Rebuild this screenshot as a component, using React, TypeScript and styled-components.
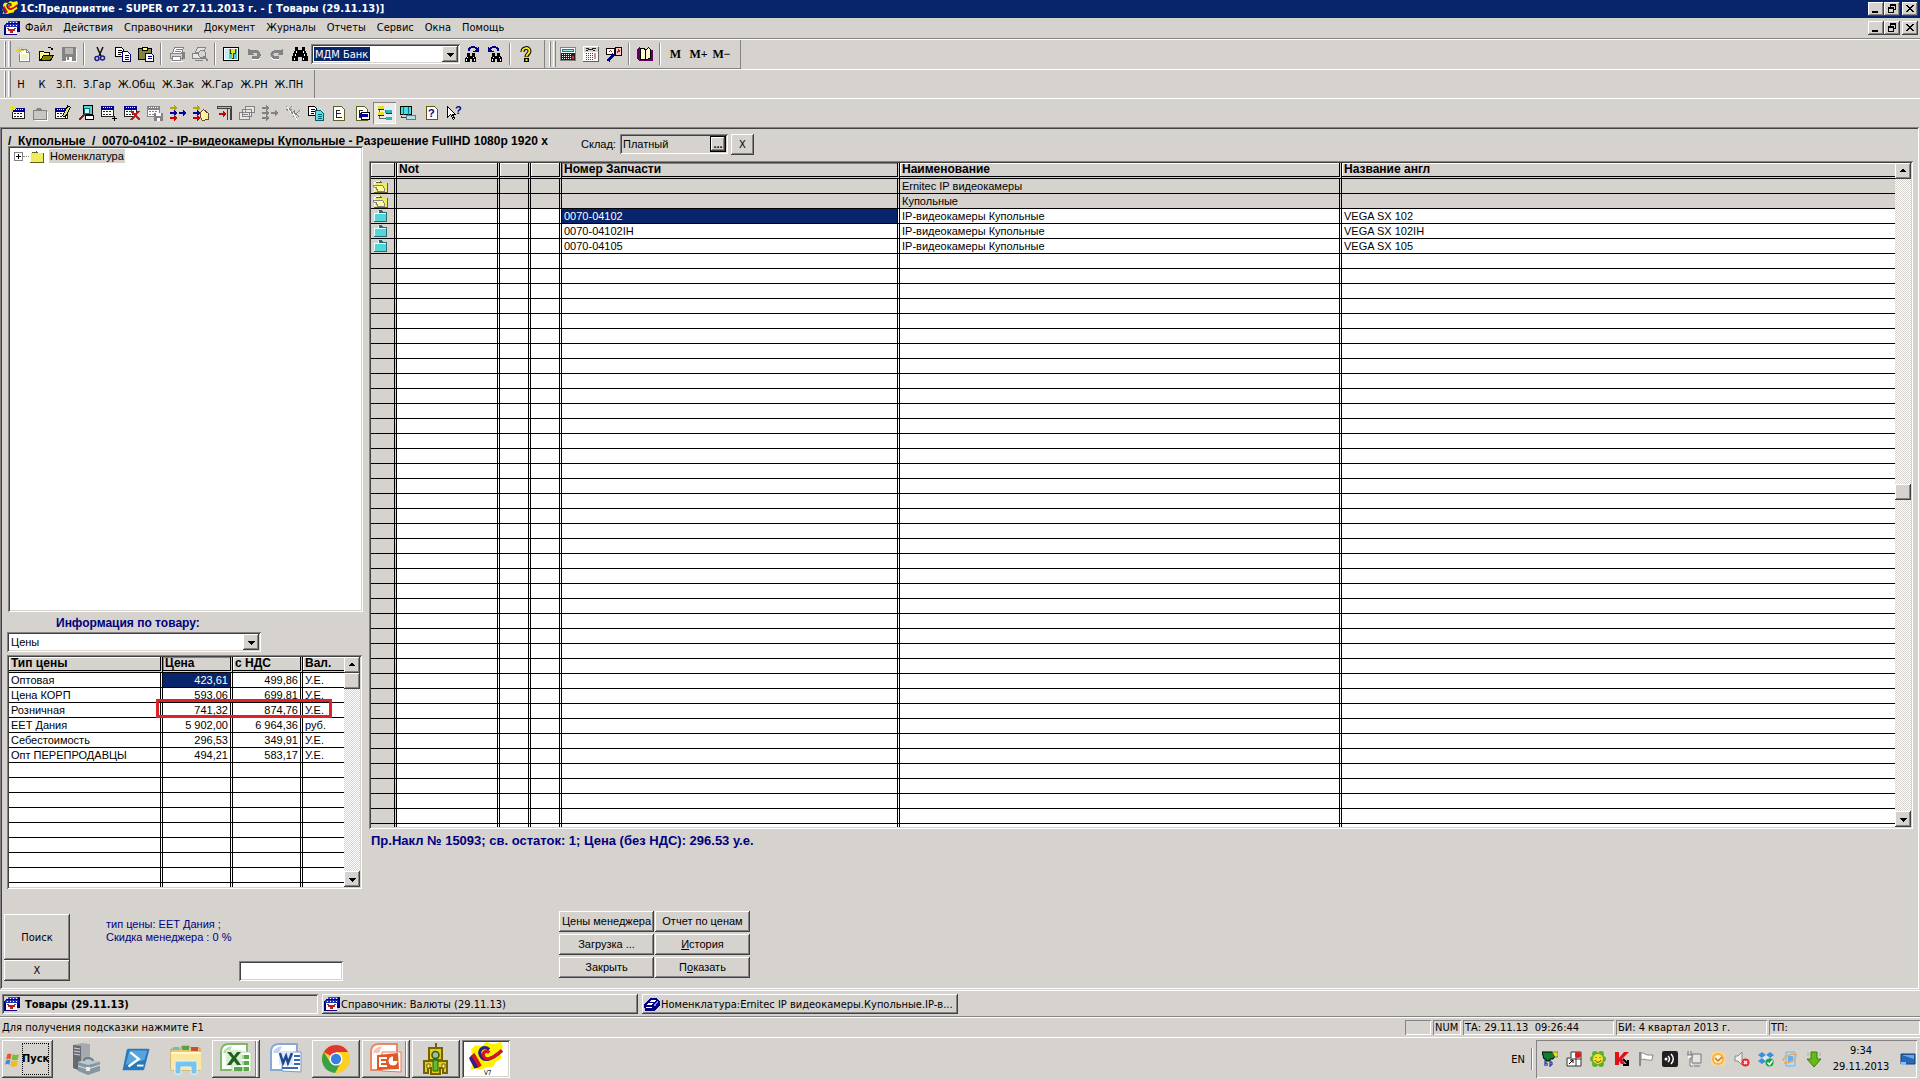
import React from 'react';
import styled, { createGlobalStyle, css } from 'styled-components';

const face = '#d6d3ce';
const navy = '#08246b';
const ink = '#000080';
const ui = '"DejaVu Sans Condensed", "DejaVu Sans", sans-serif';
const ms = '"Liberation Sans", Arial, sans-serif';

const raised = css`
  box-shadow: inset -1px -1px #424142, inset 1px 1px #fff, inset -2px -2px #848284;
`;
const sunken = css`
  box-shadow: inset 1px 1px #848284, inset -1px -1px #fff, inset 2px 2px #424142, inset -2px -2px ${face};
`;
const thinSunken = css`
  box-shadow: inset 1px 1px #848284, inset -1px -1px #fff;
`;

const Global = createGlobalStyle`
  *, *::before, *::after { box-sizing: border-box; }
  body { margin: 0; background: ${face}; color: #000; font: 11px/13px ${ui}; }
  button, input, select { font: inherit; color: inherit; margin: 0; padding: 0; border: 0; border-radius: 0; background: none; outline: none; }
  h1, h2, p { margin: 0; }
  svg { display: block; flex: none; }
`;

const Page = styled.div`
  min-height: 100vh;
  display: flex;
  flex-direction: column;
  white-space: nowrap;
  background: ${face};
`;

/* ---------- title and menu ---------- */
const TitleBar = styled.header`
  height: 18px;
  padding: 0 2px;
  display: flex;
  align-items: center;
  gap: 2px;
  background: ${navy};
  color: #fff;
`;
const AppTitle = styled.h1`
  flex: 1;
  font-size: 11px;
  line-height: 18px;
  font-weight: bold;
`;
const WindowControls = styled.div`
  display: flex;
`;
const WindowButton = styled.button<{ $apart?: boolean }>`
  width: 16px;
  height: 14px;
  margin-left: ${p => (p.$apart ? 2 : 0)}px;
  display: grid;
  place-items: center;
  background: ${face};
  color: #000;
  ${raised}
`;
const MenuBar = styled.nav`
  height: 21px;
  padding: 0 2px 0 4px;
  display: flex;
  align-items: center;
  border-bottom: 1px solid #848284;
`;
const MenuList = styled.div`
  flex: 1;
  display: flex;
`;
const MenuItem = styled.button`
  padding: 0 6px 0 5px;
  line-height: 18px;
`;

/* ---------- toolbars ---------- */
const ToolRow = styled.div`
  display: flex;
  border-top: 1px solid #fff;
`;
const Band = styled.div<{ $end?: boolean }>`
  height: 29px;
  padding-left: 4px;
  padding-right: 7px;
  display: flex;
  align-items: center;
  border-right: 1px solid ${p => (p.$end ? '#848284' : 'transparent')};
  border-bottom: 1px solid #848284;
`;
const TextBand = styled(Band)`
  height: 28px;
  border-bottom: 0;
`;
const Grip = styled.span`
  width: 7px;
  height: 26px;
  border: solid #848284;
  border-width: 0 1px 0 0;
  box-shadow: inset 1px 0 #fff, inset -1px 0 ${face}, inset -2px 0 #fff, inset 2px 0 #848284;
`;
const Divider = styled.span`
  width: 2px;
  height: 22px;
  margin: 0 3px;
  border-left: 1px solid #848284;
  border-right: 1px solid #fff;
`;
const ToolButton = styled.button<{ $pressed?: boolean }>`
  width: 23px;
  height: 22px;
  display: grid;
  place-items: center;
  ${p => p.$pressed && css`background: #ecebe8; ${thinSunken}`}
`;
const LetterButton = styled(ToolButton)`
  font: bold 12px/22px "Liberation Serif", "Times New Roman", serif;
`;
const WordButton = styled.button`
  min-width: 21px;
  height: 22px;
  padding: 0 4px 0 3px;
  font-size: 11px;
`;
const IconRow = styled.div`
  height: 29px;
  padding: 0 5px 1px;
  display: flex;
  align-items: center;
  border-top: 1px solid #fff;
`;
const Combo = styled.div<{ $w: number }>`
  position: relative;
  width: ${p => p.$w}px;
  height: 20px;
  padding: 2px;
  display: flex;
  align-items: center;
  justify-content: space-between;
  background: #fff;
  ${sunken}
`;
const SearchInput = styled.input`
  width: 56px;
  height: 14px;
  padding-left: 1px;
  margin-left: 1px;
  background: ${navy};
  color: #fff;
`;
const DropButton = styled.button`
  width: 16px;
  height: 16px;
  display: grid;
  place-items: center;
  background: ${face};
  ${raised}
`;
const DropArrow = styled.span`
  position: absolute;
  right: 2px;
  top: 2px;
  width: 16px;
  height: 16px;
  display: grid;
  place-items: center;
  pointer-events: none;
  background: ${face};
  ${raised}
`;
const Select = styled.select`
  appearance: none;
  width: 100%;
  height: 16px;
  padding-left: 2px;
  font: 11px/16px ${ms};
`;

/* ---------- workspace ---------- */
const Workspace = styled.main`
  flex: 1;
  min-height: 0;
  margin-right: 1px;
  padding: 2px;
  display: flex;
  font: 11px/13px ${ms};
  ${sunken}
`;
const LeftPane = styled.section`
  width: 367px;
  flex: none;
  display: flex;
  flex-direction: column;
`;
const RightPane = styled.section`
  flex: 1;
  min-width: 0;
  padding-right: 4px;
  display: flex;
  flex-direction: column;
`;
const Path = styled.h2`
  width: 560px;
  height: 17px;
  padding: 5px 0 0 6px;
  font-size: 12px;
  line-height: 15px;
  font-weight: bold;
  white-space: pre;
`;
const Tree = styled.div`
  flex: 1;
  margin: 0 6px 0 6px;
  padding: 3px 6px;
  background: #fff;
  ${sunken}
`;
const TreeItem = styled.div`
  height: 14px;
  display: flex;
  align-items: center;
`;
const Expander = styled.button`
  width: 9px;
  height: 9px;
  display: grid;
  place-items: center;
  border: 1px solid #848284;
`;
const Dots = styled.span`
  width: 6px;
  border-top: 1px dotted #848284;
`;
const TreeLabel = styled.span`
  margin-left: 4px;
  padding: 0 1px;
  line-height: 14px;
  background: ${face};
`;
const InfoLabel = styled.label`
  padding: 5px 0 0 54px;
  height: 20px;
  font-size: 12px;
  font-weight: bold;
  color: ${ink};
`;
const PriceBlock = styled.div`
  padding-left: 5px;
  display: flex;
  flex-direction: column;
  gap: 3px;
`;
const GridFrame = styled.div<{ $h?: number; $w?: number }>`
  position: relative;
  min-height: 0;
  ${p => (p.$h ? `height: ${p.$h}px;` : 'flex: 1 1 0;')}
  ${p => p.$w && `width: ${p.$w}px;`}
  padding: 2px;
  display: flex;
  background: #fff;
  ${sunken}
`;
const GridClip = styled.div`
  flex: 1;
  min-width: 0;
  height: 100%;
  overflow: hidden;
`;
const Sheet = styled.table`
  width: 100%;
  table-layout: fixed;
  border-collapse: separate;
  border-spacing: 0;
`;
const Head = styled.th<{ $active?: boolean }>`
  height: 16px;
  padding: 0 0 0 2px;
  overflow: hidden;
  text-align: left;
  font: bold 12px/13px ${ms};
  background: ${face};
  border-right: 3px double #000;
  border-bottom: 3px double #000;
  box-shadow: inset 1px 1px ${p => (p.$active ? '#848284' : '#fff')};
  &:last-child { border-right: 0; }
`;
const Cell = styled.td<{ $group?: boolean; $right?: boolean; $selected?: boolean }>`
  height: 15px;
  padding: 0 2px;
  overflow: hidden;
  line-height: 14px;
  text-align: ${p => (p.$right ? 'right' : 'left')};
  background: ${p => (p.$selected ? navy : p.$group ? face : '#fff')};
  background-clip: ${p => (p.$selected ? 'padding-box' : 'border-box')};
  color: ${p => (p.$selected ? '#fff' : '#000')};
  border-right: 3px double #000;
  border-bottom: 1px solid #000;
  &:last-child { border-right: 0; }
`;
const Track = styled.div`
  width: 16px;
  display: flex;
  flex-direction: column;
  justify-content: space-between;
  background: repeating-conic-gradient(#fff 0 25%, ${face} 0 50%) 0 0 / 2px 2px;
`;
const Thumb = styled.button`
  width: 16px;
  height: 16px;
  background: ${face};
  ${raised}
`;
const Gap = styled.span<{ $grow: number }>`
  flex: ${p => p.$grow} 1 0;
`;
const Marker = styled.span`
  position: absolute;
  left: 149px;
  top: 44px;
  width: 176px;
  height: 19px;
  border: 3px solid #dc2328;
  pointer-events: none;
`;
const LeftFooter = styled.div`
  height: 98px;
  padding: 25px 0 0 2px;
  display: flex;
  align-items: flex-start;
`;
const Stack = styled.div`
  display: flex;
  flex-direction: column;
`;
const PushButton = styled.button<{ $w: number; $h?: number }>`
  width: ${p => p.$w}px;
  height: ${p => p.$h ?? 21}px;
  font: 11px/13px ${p => (p.$h ? ui : ms)};
  background: ${face};
  overflow: hidden;
  ${raised}
`;
const Note = styled.p`
  width: 133px;
  margin: 4px 0 0 36px;
  font-family: ${ms};
  color: ${ink};
`;
const NoteInput = styled.input`
  align-self: flex-end;
  width: 104px;
  height: 20px;
  margin-bottom: 6px;
  padding: 2px 4px;
  background: #fff;
  ${sunken}
`;
const StoreRow = styled.div`
  height: 32px;
  padding: 5px 0 0 212px;
  display: flex;
  align-items: flex-start;
  gap: 3px;
`;
const StoreLabel = styled.label`
  width: 36px;
  line-height: 21px;
`;
const StoreField = styled.div`
  width: 108px;
  height: 20px;
  padding: 2px;
  display: flex;
  ${sunken}
`;
const StoreInput = styled.input`
  flex: 1;
  min-width: 0;
  padding-left: 1px;
`;
const Ellipsis = styled.button`
  width: 16px;
  border: 1px solid #000;
  font-weight: bold;
  line-height: 12px;
  background: ${face};
  ${raised}
`;
const Summary = styled.p`
  height: 82px;
  padding: 5px 0 0 2px;
  font-size: 13px;
  font-weight: bold;
  color: ${ink};
`;
const Actions = styled.div`
  height: 76px;
  padding-left: 190px;
  display: grid;
  grid-template-columns: 95px 95px;
  gap: 2px 1px;
  align-content: start;
`;

/* ---------- open windows, status ---------- */
const WindowTabs = styled.nav`
  margin-top: 1px;
  height: 27px;
  padding: 3px 2px 0;
  display: flex;
  gap: 4px;
  border-top: 1px solid #fff;
  border-bottom: 1px solid #848284;
`;
const WindowTab = styled.button<{ $active?: boolean }>`
  width: 316px;
  height: 20px;
  padding: 0 2px;
  display: flex;
  align-items: center;
  gap: ${p => (p.$active ? 5 : 1)}px;
  font-weight: ${p => (p.$active ? 'bold' : 'normal')};
  ${p => (p.$active ? sunken : raised)}
`;
const StatusBar = styled.footer`
  height: 21px;
  padding: 2px 0;
  display: flex;
  gap: 2px;
  border-top: 1px solid #fff;
  border-bottom: 1px solid #fff;
`;
const Hint = styled.span`
  flex: 1;
  padding-left: 2px;
  line-height: 16px;
`;
const StatusCell = styled.span<{ $w: number }>`
  width: ${p => p.$w}px;
  padding-left: 2px;
  line-height: 16px;
  white-space: pre;
  ${thinSunken}
`;

/* ---------- taskbar ---------- */
const Taskbar = styled.nav`
  height: 42px;
  padding: 2px 3px 2px 2px;
  display: flex;
  align-items: center;
`;
const StartButton = styled.button`
  width: 51px;
  height: 38px;
  margin-right: 9px;
  padding-left: 2px;
  display: flex;
  align-items: center;
  gap: 1px;
  font-weight: bold;
  ${raised}
`;
const StartText = styled.span`
  height: 32px;
  line-height: 32px;
  outline: 1px dotted #000;
  outline-offset: -1px;
`;
const AppButton = styled.button<{ $state?: 'open' | 'many' | 'active' }>`
  width: 48px;
  height: 38px;
  margin-right: 2px;
  display: grid;
  place-items: center;
  ${p => p.$state === 'open' && raised}
  ${p => p.$state === 'many' && css`box-shadow: inset -1px -1px #424142, inset 1px 1px #fff, inset -2px 0 #848284, inset -3px 0 ${face}, inset -4px 0 #fff, inset -5px -2px #848284;`}
  ${p => p.$state === 'active' && css`background: #fff; ${sunken}`}
`;
const Spring = styled.span`
  flex: 1;
`;
const Lang = styled.span`
  margin-right: 3px;
`;
const Tray = styled.div`
  height: 38px;
  padding: 0 1px 0 6px;
  display: flex;
  align-items: center;
  gap: 8px;
  ${thinSunken}
`;
const Clock = styled.time`
  width: 62px;
  text-align: center;
  line-height: 16px;
`;

/* ---------- icons ---------- */
type Drawn = { children: React.ReactNode; size?: number; box?: number };
const Ico = ({ children, size = 16, box = 16 }: Drawn) => (
  <svg width={size} height={size} viewBox={`0 0 ${box} ${box}`} shapeRendering="crispEdges" aria-hidden="true">{children}</svg>
);
const Smooth = ({ children, size = 16, box = 16 }: Drawn) => (
  <svg width={size} height={size} viewBox={`0 0 ${box} ${box}`} aria-hidden="true">{children}</svg>
);
/* thin pixel lines are drawn on half coordinates so that each covers one pixel */
const Half = ({ children }: { children: React.ReactNode }) => <g transform="translate(.5 .5)">{children}</g>;

const Up = () => <Ico size={8} box={8}><path d="M3 2h2v1h1v1h1v1H1V4h1V3h1z" /></Ico>;
const Down = () => <Ico size={8} box={8}><path d="M1 3h7v1H7v1H6v1H5v1H4V6H3V5H2V4H1z" /></Ico>;
const MinIcon = () => <Ico size={10} box={10}><path d="M1 7h6v2H1z" /></Ico>;
const RestoreIcon = () => <Ico size={10} box={10}><path d="M3 0h6v6H7V5h1V2H4v1H3zM1 3h6v6H1zM2 5v3h4V5z" fillRule="evenodd" /></Ico>;
const CloseIcon = () => <Ico size={10} box={10}><path d="M1 1h2v1h1v1h2V2h1V1h2v1H8v1H7v1H6v1h1v1h1v1h1v1H7V7H6V6H4v1H3v1H1V7h1V6h1V5h1V4H3V3H2V2H1z" /></Ico>;

const LogoV7 = ({ size = 16 }: { size?: number }) => (
  <Smooth size={size} box={32}>
    <path d="M2 7l4-4 6 1 4-4 7 2 7-2 2 5-3 6 2 4-6 4-2 4-7 1-5 2-5-1-5 1 2-5-3-4 3-4z" fill="#fff200" />
    <path d="M0 15l3-3 5 8 1 4-4 1z" fill="#24248c" />
    <path d="M2 13l3-3 7 12-3 2z" fill="#d8141c" />
    <path d="M19 7c-5-4-11 0-8 6s10 4 20-5" fill="none" stroke="#24248c" strokeWidth="3" />
    <path d="M19 10c-3-3-7 0-5 4 3 4 9 1 17-6" fill="none" stroke="#d8141c" strokeWidth="3" />
    {size > 16 && <text x="14" y="31" fontSize="6" fontFamily="DejaVu Sans Condensed">V7</text>}
  </Smooth>
);
const BookIcon = () => (
  <Ico><path d="M4 1h12v11h-3v3H0V5h2V3h2z" fill="#000080" /><path d="M2 6h11v8H2z" fill="#fff" /><path d="M1 4h13v3H1z" fill="#2030b0" /><path d="M4 1h10v2H4z" fill="#3848d0" /><path d="M3 5h1v1H3zM6 5h1v1H6zM9 5h1v1H9zM12 5h1v1h-1zM6 2h1v1H6zM9 2h1v1H9zM12 2h1v1h-1z" fill="#fff" /><path d="M4 9h7v2H9v2H6v-2H4z" fill="#c81818" /><path d="M3 8h2v1H3zM10 8h2v1h-2z" fill="#555" /></Ico>
);
const DataIcon = () => (
  <Ico><path d="M0 9l6-7h7l3 4v3l-6 6H1z" fill="#000080" /><path d="M2 9l5-5h5l-4 5zM2 11h6v1H2z" fill="#fff" /><path d="M4 6h6v1H4z" fill="#000080" /><path d="M10 9l3-4 1 1-3 5z" fill="#7890e0" /></Ico>
);
const NewIcon = () => <Ico><Half><path d="M4 3h7l3 3v9H4z" fill="#fff" stroke="#848284" /><path d="M11 3v3h3" fill="none" stroke="#848284" /></Half><path d="M6 8h7v6H6z" fill="#f4f2c0" /><Half><path d="M4 0v7M0 4h8M1 1l6 6M7 1L1 7" stroke="#d8cc30" /></Half></Ico>;
const OpenIcon = () => <Ico><Half><path d="M1 5h4l1 1h5v3H5l-3 5H1z" fill="#ffff80" stroke="#000" /><path d="M2 14l3-5h10l-3 5z" fill="#848200" stroke="#000" /><path d="M9 2c1-2 4-1 5 1M12 3h2V1" fill="none" stroke="#000" /></Half></Ico>;
const SaveIcon = () => <Ico><path d="M1 1h14v14H1z" fill="#848284" /><path d="M4 2h8v6H4z" fill="#b8b6b2" /><path d="M5 11h6v4H5z" fill="#fff" /><path d="M6 11h2v3H6z" fill="#848284" /><Half><path d="M1 15h14V2" fill="none" stroke="#fff" /></Half></Ico>;
const CutIcon = () => <Smooth><path d="M5 1l4 9M11 1L7 10" stroke="#111" strokeWidth="1.5" /><circle cx="5" cy="12.500" r="2" fill="none" stroke="#1c1c8c" strokeWidth="1.500" /><circle cx="10.500" cy="12" r="2" fill="none" stroke="#1c1c8c" strokeWidth="1.500" /></Smooth>;
const CopyIcon = ({ c = '#000080', b = '#fff' }: { c?: string; b?: string }) => <Ico><Half><path d="M0 1h6l2 2v7H0z" fill="#fff" stroke="#000" /><path d="M2 4h4M2 6h4M2 8h3" stroke="#000" /><path d="M7 5h5l3 3v7H7z" fill={b} stroke={c} /><path d="M9 9h4M9 11h4M9 13h4" stroke={c} /></Half></Ico>;
const PasteIcon = () => <Ico><Half><path d="M0 2h13v11H0z" fill="#848440" stroke="#000" /><path d="M4 1h5v3H4z" fill="#ffff80" stroke="#000" /><path d="M7 7h6l2 2v6H7z" fill="#fff" stroke="#000080" /><path d="M9 10h4M9 12h4" stroke="#000080" /></Half></Ico>;
const PrintIcon = () => <Ico><Half><path d="M5 1h9l-2 6H3z" fill="#fff" stroke="#848284" /><path d="M6 3h6M5 5h6" stroke="#848284" /><path d="M1 7h12v5H1z" fill="#d6d3ce" stroke="#848284" /><path d="M3 10h8v4H3z" fill="#fff" stroke="#848284" /></Half><path d="M13 6h3v7h-2v1h-1z" fill="#848284" /><path d="M2 15h12v1H2z" fill="#fff" /></Ico>;
const PreviewIcon = () => <Ico><Half><path d="M5 1h8l-2 5H3zM0 7h12v5H0z" fill="#e8e6e2" stroke="#848284" /><path d="M2 14h8" stroke="#848284" /></Half><circle cx="10" cy="8" r="3.500" fill="#d6d3ce" stroke="#848284" /><path d="M12 10l4 5" stroke="#848284" strokeWidth="2" /></Ico>;
const KeyIcon = () => <Ico><path d="M0 1h16v14H0z" fill="#000" /><path d="M1 2h14v12H1z" fill="#fff" /><path d="M2 3h12v10H2z" fill="#58c8d0" /><path d="M2 3h4v10H2z" fill="#b8f0f0" /><path d="M7 3h6v5h-2v5H9V8H7z" fill="#404000" /><path d="M8 3h4v4h-2v5H9V7H8z" fill="#e8e020" /></Ico>;
const UndoIcon = ({ flip }: { flip?: boolean }) => <Ico><g transform={flip ? 'translate(16 0) scale(-1 1)' : undefined}><path d="M2 3v6h6L6 7h4c2 0 2 3 0 3H6v3h5c5 0 5-9-1-9H5z" fill="#848284" /><path d="M6 13h6l2-2v1l-2 2H6z" fill="#fff" /></g></Ico>;
const Binoc = ({ arrow, flip }: { arrow?: boolean; flip?: boolean }) => (
  <Ico><g transform={flip ? 'translate(16 0) scale(-1 1)' : undefined}>
    {arrow ? <>
      <path d="M3 7h3v3h2V7h3v3l1 2v4H8v-3H6v3H1v-4l2-2z" fill="#000" />
      <path d="M3 11h1v1H3zM9 11h1v1H9zM2 13h1v2H2zM10 13h1v2h-1z" fill="#fff" />
      <path d="M4 2h1V1h2V0h4v1h2v1h1V1h1v5H9V5h2V4h1V3h-1V2H7v1H6v2H4z" fill="#000090" />
    </> : <>
      <path d="M3 1h3v3h4V1h3v3l1 2 2 5v4h-6v-4H6v4H0v-4l2-5 1-2z" fill="#000" />
      <path d="M4 5h1v2H4zM11 5h1v2h-1zM3 8h1v2H3zM12 8h1v2h-1zM2 12h1v2H2zM11 12h1v2h-1z" fill="#fff" />
    </>}
  </g></Ico>
);
const HelpIcon = () => <Smooth><path d="M4.500 6c0-5 7-5 7-1 0 3-3 3-3 6" fill="none" stroke="#000" strokeWidth="4" /><path d="M6 12h5v4H6z" fill="#000" /><path d="M4.500 6c0-5 7-5 7-1 0 3-3 2.500-3 5.500M8.500 13v2" fill="none" stroke="#f0e820" strokeWidth="2" /></Smooth>;
const CalcIcon = () => <Ico><path d="M0 1h16v14H0z" fill="#848284" /><path d="M1 2h14v12H1z" fill="#fff" /><path d="M2 3h12v3H2z" fill="#108090" /><path d="M3 4h10v1H3z" fill="#a0f0f0" /><path d="M1 7h14v7H1z" fill="#222" /><path d="M2 8.500h10M2 10.500h10M2 12.500h10" stroke="#fff" strokeDasharray="1 1" /><path d="M12 10h2v3h-2z" fill="#d83030" /></Ico>;
const CalendarIcon = () => <Ico><path d="M0 1h16v15H0z" fill="#606060" /><path d="M0 0h15v15H0z" fill="#fff" /><path d="M1 1h14v5H1z" fill="#d6d3ce" /><path d="M3 2h3v1H3zM9 2h4v1H9zM5 3h5v1H5zM3 4h2v1H3zM10 4h2v1h-2z" fill="#222" /><path d="M3 7.500h10M3 9.500h10M3 11.500h10M3 13.500h7" stroke="#444" strokeDasharray="1 1" /><path d="M11 7h2v6h-2z" fill="#e09080" /></Ico>;
const FormulaIcon = () => <Ico><Half><path d="M0 2h8v6H0z" fill="#fff" stroke="#000" /><path d="M9 1h6v8H9z" fill="#f4c8c0" stroke="#000" /><path d="M2 6l2-2 2 2M11 7l1-4 2 3" stroke="#c81818" fill="none" /></Half><path d="M8 8l-6 7" stroke="#000080" strokeWidth="3" /></Ico>;
const ManualIcon = () => <Ico><path d="M0 3l3-2v12h10V4h3v11H3l-3-2z" fill="#600060" /><Half><path d="M3 2h4l1 2v9H3zM8 4l3-3 2 2v9l-5 1z" fill="#fffcd0" stroke="#000" /></Half></Ico>;

const Sheetlet = ({ x = 3, y = 2, gray }: { x?: number; y?: number; gray?: boolean }) => (
  <g transform={`translate(${x} ${y})`}><path d="M0 0h13v11H0z" fill={gray ? '#848284' : '#222'} /><path d="M1 4h11v6H1z" fill="#fff" /><path d="M0 0h13v4H0z" fill={gray ? '#848284' : '#000090'} /><path d="M2 1.500h10" stroke="#fff" strokeDasharray="1 1" /><path d="M2 5.500h9M2 8.500h9" stroke={gray ? '#848284' : '#222'} strokeDasharray="2 1" /></g>
);
const AddRow = () => <Ico><Sheetlet x={3} y={3} /><Half><path d="M3 0v6M0 3h6M1 1l4 4M5 1L1 5" stroke="#e0d840" /></Half></Ico>;
const GrayFolder = () => <Ico><path d="M1 5h3V4h1V3h4v1h1v1h5v10H1z" fill="#848284" /><path d="M2 6h12v8H2z" fill="#c8c6c2" /><Half><path d="M2 15h13V6" stroke="#fff" fill="none" /></Half></Ico>;
const EditRow = () => <Ico><Sheetlet x={0} y={3} /><path d="M14 1l-5 11" stroke="#000" strokeWidth="4" /><path d="M14 2l-5 9" stroke="#f0e040" strokeWidth="2" /></Ico>;
const ViewRow = () => <Ico><Half><path d="M5 0h9v9H5z" fill="#50d8d8" stroke="#000" /><path d="M7 10h8v4H7z" fill="#fff" stroke="#000" /></Half><circle cx="9" cy="6" r="3" fill="#c0ffff" stroke="#107080" /><path d="M7 9l-6 6" stroke="#802020" strokeWidth="2" /></Ico>;
const PlusRow = () => <Ico><Sheetlet x={0} y={1} /><Half><path d="M13 10v5M10 13h6" stroke="#000" /></Half></Ico>;
const DeleteRow = () => <Ico><Sheetlet x={0} y={1} /><path d="M7 6l9 9M15 6l-8 9" stroke="#c81818" strokeWidth="2" /></Ico>;
const SaveRow = () => <Ico><Sheetlet x={0} y={1} gray /><path d="M7 8h9v8H7z" fill="#848284" /><path d="M9 8h5v3H9zM10 13h3v3h-3z" fill="#fff" /></Ico>;
const Arrow = ({ x, y, c }: { x: number; y: number; c: string }) => <path transform={`translate(${x} ${y})`} d="M0 1h4V-1h1V0h1v1h1v2H6v1H5v1H4V3H0z" fill={c} />;
const Move = ({ gray, hand }: { gray?: boolean; hand?: boolean }) => <Ico><Arrow x={0} y={1} c={gray ? '#848284' : '#b8a800'} /><Arrow x={0} y={6} c={gray ? '#848284' : '#0000a0'} /><Arrow x={0} y={11} c={gray ? '#848284' : '#c80000'} />{hand ? <Half><path d="M7 7l3-3 5 4v6l-6 1-2-3z" fill="#fff0a0" stroke="#605020" /></Half> : <Arrow x={9} y={6} c={gray ? '#848284' : '#0000a0'} />}</Ico>;
const Exit = () => <Ico><path d="M1 1h15v3H1z" fill="#404040" /><path d="M2 2h13v1H2z" fill="#b8b6b2" /><path d="M11 4h1v11h-1zM14 4h2v11h-2z" fill="#404040" /><Arrow x={3} y={7} c="#c80000" /></Ico>;
const Stacked = () => <Ico><Half><path d="M6 1h9v6H6zM3 4h9v7H3zM0 7h10v7H0z" fill="#e8e6e2" stroke="#848284" /><path d="M2 9h6M2 11h6" stroke="#848284" /></Half></Ico>;
const Gray = () => <Ico><Half><path d="M1 1l5 5M6 1L1 6M8 6l6 6M14 5l-7 7M3 3l9 10M0 4h6M9 4v4" stroke="#848284" /><path d="M8 8l4 7M2 2l4 6" stroke="#fff" /></Half></Ico>;
const DocList = ({ c = '#222', arrow }: { c?: string; arrow?: boolean }) => <Ico><Half><path d="M2 1h8l3 3v11H2z" fill="#fff" stroke="#606020" /><path d="M5 4v8M5 5h3M5 8h4M5 12h5" stroke={c} fill="none" />{arrow && <path d="M7 7h8v7H7z" fill="#fff" stroke="#000" />}</Half>{arrow && <path d="M4 10l4-3v2h6v3H8v2z" fill="#0000a0" />}</Ico>;
const TreeTool = () => <Ico><Half><path d="M2 3v10h6M8 4v3h3" stroke="#666" fill="none" /></Half><path d="M1 1h6v3H1zM1 7h6v3H1z" fill="#e8e020" /><path d="M9 5h6v3H9zM9 12h6v3H9z" fill="#20b8c8" /><path d="M1 4h6v1H1zM1 10h6v1H1zM9 8h6v1H9z" fill="#222" /></Ico>;
const Screen = () => <Ico><Half><path d="M0 1h11v8H0z" fill="#40e0e0" stroke="#000" /><path d="M3 1v8M8 1v8" stroke="#107080" /><path d="M6 10h9v4H6z" fill="#b0e0e8" stroke="#508090" /><path d="M1 10v2h4" stroke="#c80000" fill="none" /></Half></Ico>;
const DocHelp = () => <Ico><Half><path d="M3 1h8l3 3v10H3z" fill="#fff" stroke="#605820" /></Half><text x="5" y="12" fontSize="11" fontWeight="bold" fontFamily="Liberation Sans" fill="#000080">?</text></Ico>;
const CursorHelp = () => <Ico><Half><path d="M1 1v11l3-3 3 5 1-1-2-4h3z" fill="#fff" stroke="#000" /></Half><text x="9" y="9" fontSize="11" fontWeight="bold" fontFamily="Liberation Sans" fill="#000080">?</text></Ico>;
const Folder = ({ kind }: { kind: 'tree' | 'open' | 'item' }) => (
  <svg width="16" height="14" viewBox="0 0 16 14" shapeRendering="crispEdges" aria-hidden="true">
    {kind === 'item'
      ? <><path d="M1 4h4V2h1V1h3v1h1v1h4v10H1z" fill="#306878" /><path d="M2 5h11v7H2z" fill="#50d8d8" /><path d="M1 4h4V2h1v2h7v1H2v7H1z" fill="#e8ffff" /></>
      : <><path d="M1 3h2V2h5v1h1v1h6v10H1z" fill="#606020" /><path d="M2 4h12v9H2z" fill="#f0ec60" /><path d="M1 3h2V2h4v1H3v1H2v9H1z" fill="#fffde0" />{kind === 'open' && <><path d="M0 6h10v1h1v2h1v4H4V11H3V9H1V8H0z" fill="#848284" /><path d="M1 7h9v2h1v3H5v-2H4V8H1z" fill="#fffca0" /></>}</>}
  </svg>
);

/* taskbar icons */
const Flag = () => <Smooth size={17}><path d="M3 3c2-1 3-1 4 0L6 8C5 7 4 7 2 8z" fill="#e8582c" /><path d="M8 3c2 1 4 1 6 0l-1 5c-2 1-4 1-6 0z" fill="#7cba3c" /><path d="M2 9c2-1 3-1 4 0l-1 4c-1-1-3-1-4 0z" fill="#3c8cdc" /><path d="M7 9c2 1 4 1 6 0l-1 5c-2 1-4 1-6 0z" fill="#f4b820" /></Smooth>;
const Server = () => <Smooth size={32} box={32}><path d="M3 2l9-2 8 1v24l-8 3-9-3z" fill="#a4aab0" /><path d="M3 2l8 1v25l-8-3z" fill="#646a70" /><path d="M4 5l6 1M4 8l6 1M4 11l6 1" stroke="#d4d8dc" /><path d="M8 19l9-3 13 3v9l-12 4-10-4z" fill="#8896a0" /><path d="M8 19l10 3 12-3-13-3z" fill="#bcc8d0" /><path d="M14 18c0-4 8-4 9 0" fill="none" stroke="#707c84" strokeWidth="2" /><path d="M8 23l10 3 12-4" stroke="#dce4e8" fill="none" /><path d="M16 24h4v4h-4z" fill="#e8eef0" /></Smooth>;
const Shell = () => <Smooth size={30} box={32}><path d="M8 5h21c1 0 2 1 1 2l-5 19c0 1-1 2-2 2H3c-1 0-2-1-1-2L6 7c0-1 1-2 2-2z" fill="#2878bc" /><path d="M9 7h19l-3 10-20 5z" fill="#58a4dc" /><path d="M10 9l9 7-11 8" fill="none" stroke="#fff" strokeWidth="2.500" /><path d="M17 23h7" stroke="#fff" strokeWidth="2" /></Smooth>;
const Explorer = () => <Smooth size={32} box={32}><path d="M1 6h9l2-3h7l2 2h9v22H1z" fill="#e8c868" stroke="#c8a040" /><path d="M3 4h6v3H3z" fill="#70b8d8" /><path d="M12 3h7v4h-7z" fill="#58a050" /><path d="M21 4h7v4h-7z" fill="#c85030" /><path d="M1 9h30v18H1z" fill="#fbe8a0" /><path d="M1 9h30v2H1z" fill="#fff6cc" /><path d="M5 31V20c0-1 1-2 2-2h18c1 0 2 1 2 2v11h-6v-7H11v7z" fill="#78c4ec" stroke="#e4f6ff" /></Smooth>;
const Office = ({ c, dark, children }: { c: string; dark: string; children: React.ReactNode }) => (
  <Smooth size={32} box={32}><path d="M9 1h18v26H1V9c0-5 3-8 8-8z" fill="#fff" stroke={c} strokeWidth="2" /><path d="M3 10c1-4 4-6 9-7l-3 7z" fill={c} opacity=".5" /><path d="M12 9h19v20l-19-1z" fill="#fff" stroke={dark} strokeWidth="1" />{children}</Smooth>
);
const Excel = () => <Office c="#7cb868" dark="#b4d4a8"><path d="M14 14h15M14 20h15M14 26h15" stroke="#58a848" strokeWidth="4" /><path d="M23 12v17" stroke="#fff" /><path d="M6 7h16v16H6z" fill="#d8f0d0" /><path d="M7 9h4l3 4 3-4h4l-5 6 5 7h-4l-3-4-3 4H7l5-7z" fill="#206020" /></Office>;
const Word = () => <Office c="#88a8d8" dark="#7898d0"><path d="M24 13h6M24 17h6M24 21h6M12 25h16" stroke="#3868b8" strokeWidth="2" /><path d="M9 8h14v14H9z" fill="#dce8fc" /><path d="M10 10l3 10 3-7 2 7 4-10" fill="none" stroke="#204890" strokeWidth="2.500" /></Office>;
const Power = () => <Office c="#e88868" dark="#e87850"><path d="M7 12l21-2 1 16-22 1z" fill="#e05828" /><path d="M10 15h7M10 19h6M10 23h7M10 14v10" fill="none" stroke="#fff" strokeWidth="2" /><circle cx="23" cy="18" r="4.500" fill="#fff" /><path d="M23 18v-5a5 5 0 0 1 5 5z" fill="#e05828" /></Office>;
const Chrome = () => <Smooth size={30} box={32}><circle cx="16" cy="16" r="15" fill="#fcd020" /><path d="M16 16L3 8.500A15 15 0 0 1 29 8.500H16z" fill="#e03830" /><path d="M3 8.500A15 15 0 0 0 15 31l6.500-12L16 16 9.500 19z" fill="#38a048" /><circle cx="16" cy="16" r="7" fill="#fff" /><circle cx="16" cy="16" r="5.500" fill="#3880e0" /></Smooth>;
const Robot = () => <Smooth size={32} box={32}><g fill="#e4cc20" stroke="#746400" strokeWidth="2"><path d="M9 5h13v12H9z" /><path d="M16 5V0" /><path d="M4 18h23v12h-4v-5h-3v6h-9v-6H8v5H4z" /></g><path d="M7 21h3v4H7zM22 21h3v4h-3z" fill="#fff4a0" stroke="#746400" /><circle cx="15.500" cy="12" r="3.500" fill="#a8b8a0" stroke="#286010" strokeWidth="1.500" /><path d="M13 17h5v11h-5z" fill="#58c028" stroke="#286010" /></Smooth>;
const T = Smooth;
const TrayIcons = () => (
  <>
    <T><path d="M0 1h10l4 3-3 4H8v2H4V8H2z" fill="#108030" stroke="#000" /><path d="M10 1h6v5h-3z" fill="#e8e020" stroke="#333" strokeWidth=".5" /><path d="M3 9v6M3 12h2v3M8 16v-5h2v3H8" stroke="#0818a0" fill="none" /></T>
    <T><path d="M5 1h10v14H1V7h4z" fill="#fff" stroke="#333" /><path d="M10 1v14M5 8h10" stroke="#333" /><circle cx="12" cy="4" r="3" fill="#e01818" /><path d="M3 13l4-4M4 9h3v3" stroke="#000" fill="none" /></T>
    <T><g fill="#60b028"><circle cx="5" cy="3" r="3" /><circle cx="11" cy="3" r="3" /><circle cx="3" cy="8" r="3" /><circle cx="13" cy="8" r="3" /><circle cx="5" cy="13" r="3" /><circle cx="11" cy="13" r="3" /></g><circle cx="8" cy="8" r="5" fill="#f4e430" /><path d="M6 6v1M10 6v1M5 9c1 3 5 3 6 0" stroke="#604000" fill="none" /></T>
    <T><path d="M1 1h4v6l5-6h5L8 8l3 5H7L5 10v4H1z" fill="#e01018" /><path d="M9 8l5 5M14 9v5H9" stroke="#000" strokeWidth="2" fill="none" /></T>
    <T><path d="M2 1v14" stroke="#888" strokeWidth="2" /><path d="M3 2c3-1 4 2 7 2h5l-1 5c-4 1-7-2-11 0z" fill="#fff" stroke="#888" /></T>
    <T><rect width="16" height="16" rx="2" fill="#202020" /><circle cx="4" cy="8" r="1.500" fill="#fff" /><path d="M6 5c2 2 2 4 0 6M9 3c3 3 3 7 0 10" stroke="#fff" strokeWidth="1.500" fill="none" /></T>
    <T><path d="M6 3h9v9H6z" fill="#e4e4e4" stroke="#777" /><path d="M8 15h6M2 0v4M5 0v4M1 4h5v3H4v8h3" stroke="#777" fill="#fff" /></T>
    <T><path d="M3 1h10l2 2v12H1V4z" fill="#f8d898" /><circle cx="8" cy="8" r="6" fill="#f4b040" /><circle cx="8" cy="8" r="4" fill="#fff0d0" /><path d="M5 7l3 3 4-4" stroke="#c07818" strokeWidth="1.500" fill="none" /></T>
    <T><path d="M1 5h3l4-4v13l-4-4H1z" fill="#f0f0f0" stroke="#888" /><circle cx="11.500" cy="11.500" r="4" fill="#e03030" /><path d="M10 10l3 3M13 10l-3 3" stroke="#fff" strokeWidth="1.500" /></T>
    <T><path d="M4 1l4 3-4 3-4-3zM12 1l4 3-4 3-4-3zM4 7l4 3-4 3-4-3zM12 7l4 3-4 3-4-3z" fill="#3890d8" /><path d="M8 4l4 3-4 3-4-3z" fill="#d8ecfc" /><circle cx="11.500" cy="11.500" r="4" fill="#20a040" /><path d="M9.500 11.500l2 2 3-4" stroke="#fff" strokeWidth="1.500" fill="none" /></T>
    <T><path d="M4 1h9v14H4z" fill="#b8dcf4" stroke="#78b0dc" /><path d="M6 5h5v6H6z" fill="#68b0e4" /><path d="M1 10c0-5 9-8 14-6M2 12c4 0 9-1 12-6" stroke="#e8a860" strokeWidth="1.500" fill="none" /></T>
    <T><path d="M5 1h6v7h4l-7 8-7-8h4z" fill="#68b818" stroke="#3c8008" /><path d="M2 1v4M14 1v4" stroke="#b0b0b0" /></T>
  </>
);
const DesktopIcon = () => <Smooth><path d="M1 3h14v10H1z" fill="#2868b8" stroke="#184078" /><path d="M2 4h12v4z" fill="#68a8e8" /><path d="M1 11h5v3H1z" fill="#88c0f0" /></Smooth>;

/* ---------- data ---------- */
const menus = ['Файл', 'Действия', 'Справочники', 'Документ', 'Журналы', 'Отчеты', 'Сервис', 'Окна', 'Помощь'];
const shortcuts = ['Н', 'К', 'З.П.', 'З.Гар', 'Ж.Общ', 'Ж.Зак', 'Ж.Гар', 'Ж.РН', 'Ж.ПН'];
const columns = [
  { title: '', w: 26 }, { title: 'Not', w: 103 }, { title: '', w: 31 }, { title: '', w: 31 },
  { title: 'Номер Запчасти', w: 338, active: true }, { title: 'Наименование', w: 442 }, { title: 'Название англ' },
] as { title: string; w?: number; active?: boolean }[];
type Goods = { group?: boolean; no?: string; name?: string; en?: string };
const goods: Goods[] = [
  { group: true, name: 'Ernitec IP видеокамеры' },
  { group: true, name: 'Купольные' },
  { no: '0070-04102', name: 'IP-видеокамеры Купольные', en: 'VEGA SX 102' },
  { no: '0070-04102IH', name: 'IP-видеокамеры Купольные', en: 'VEGA SX 102IH' },
  { no: '0070-04105', name: 'IP-видеокамеры Купольные', en: 'VEGA SX 105' },
  ...Array.from({ length: 39 }, () => ({})),
];
const prices = [
  ['Оптовая', '423,61', '499,86', 'У.Е.'],
  ['Цена КОРП', '593,06', '699,81', 'У.Е.'],
  ['Розничная', '741,32', '874,76', 'У.Е.'],
  ['ЕЕТ Дания', '5 902,00', '6 964,36', 'руб.'],
  ['Себестоимость', '296,53', '349,91', 'У.Е.'],
  ['Опт ПЕРЕПРОДАВЦЫ', '494,21', '583,17', 'У.Е.'],
  ...Array.from({ length: 9 }, () => ['', '', '', '']),
];
const catalogTools: [string, React.ReactNode][] = [
  ['Новая строка', <AddRow />], ['Новая группа', <GrayFolder />], ['Изменить', <EditRow />], ['Просмотр', <ViewRow />],
  ['Копировать строку', <PlusRow />], ['Удалить', <DeleteRow />], ['Записать', <SaveRow />], ['Перенести', <Move />],
  ['Выбрать перенос', <Move hand />], ['Выход из группы', <Exit />], ['Подчиненные', <Stacked />], ['Отбор', <Move gray />],
  ['Снять отбор', <Gray />], ['Скопировать', <CopyIcon c="#006070" b="#60e0e0" />], ['Список', <DocList />], ['Вернуть', <DocList arrow />],
  ['Дерево', <TreeTool />], ['Экран', <Screen />], ['Описание', <DocHelp />], ['Что это', <CursorHelp />],
];

const Controls = () => (
  <WindowControls>
    <WindowButton aria-label="Свернуть"><MinIcon /></WindowButton>
    <WindowButton aria-label="Восстановить"><RestoreIcon /></WindowButton>
    <WindowButton aria-label="Закрыть окно" $apart><CloseIcon /></WindowButton>
  </WindowControls>
);
const Scroll = ({ before, after }: { before: number; after: number }) => (
  <Track>
    <DropButton aria-label="Вверх"><Up /></DropButton>
    <Gap $grow={before} />
    <Thumb aria-label="Позиция" />
    <Gap $grow={after} />
    <DropButton aria-label="Вниз"><Down /></DropButton>
  </Track>
);
const Tool = ({ name, children, pressed }: { name: string; children: React.ReactNode; pressed?: boolean }) => (
  <ToolButton aria-label={name} $pressed={pressed}>{children}</ToolButton>
);

export default function App() {
  return (
    <Page>
      <Global />
      <TitleBar>
        <LogoV7 />
        <AppTitle>1С:Предприятие - SUPER от 27.11.2013 г. - [ Товары (29.11.13)]</AppTitle>
        <Controls />
      </TitleBar>
      <MenuBar>
        <BookIcon />
        <MenuList>{menus.map(m => <MenuItem key={m}>{m}</MenuItem>)}</MenuList>
        <Controls />
      </MenuBar>

      <ToolRow>
        <Band $end>
          <Grip />
          <Tool name="Новый"><NewIcon /></Tool>
          <Tool name="Открыть"><OpenIcon /></Tool>
          <Tool name="Сохранить"><SaveIcon /></Tool>
          <Divider />
          <Tool name="Вырезать"><CutIcon /></Tool>
          <Tool name="Копировать"><CopyIcon /></Tool>
          <Tool name="Вставить"><PasteIcon /></Tool>
          <Divider />
          <Tool name="Печать"><PrintIcon /></Tool>
          <Tool name="Предварительный просмотр"><PreviewIcon /></Tool>
          <Divider />
          <Tool name="Монитор"><KeyIcon /></Tool>
          <Tool name="Отменить"><UndoIcon /></Tool>
          <Tool name="Вернуть"><UndoIcon flip /></Tool>
          <Tool name="Найти"><Binoc /></Tool>
          <Combo $w={149}>
            <SearchInput aria-label="Поиск" defaultValue="МДМ Банк" />
            <DropButton aria-label="Список поиска"><Down /></DropButton>
          </Combo>
          <Tool name="Найти далее"><Binoc arrow /></Tool>
          <Tool name="Найти ранее"><Binoc arrow flip /></Tool>
          <Divider />
          <Tool name="Помощь"><HelpIcon /></Tool>
        </Band>
        <Band $end>
          <Grip />
          <Tool name="Калькулятор"><CalcIcon /></Tool>
          <Tool name="Календарь"><CalendarIcon /></Tool>
          <Tool name="Табло"><FormulaIcon /></Tool>
          <Divider />
          <Tool name="Синтакс-помощник"><ManualIcon /></Tool>
          <Divider />
          <LetterButton>M</LetterButton>
          <LetterButton>M+</LetterButton>
          <LetterButton>M−</LetterButton>
        </Band>
      </ToolRow>
      <ToolRow>
        <TextBand $end>
          <Grip />
          {shortcuts.map(s => <WordButton key={s}>{s}</WordButton>)}
        </TextBand>
      </ToolRow>
      <IconRow>
        {catalogTools.map(([name, icon]) => <Tool key={name} name={name} pressed={name === 'Дерево'}>{icon}</Tool>)}
      </IconRow>

      <Workspace>
        <LeftPane>
          <Path>{'/  Купольные  /  0070-04102 - IP-видеокамеры Купольные - Разрешение FullHD 1080p 1920 x'}</Path>
          <Tree>
            <TreeItem>
              <Expander aria-label="Развернуть"><Ico size={7} box={7}><path d="M1 3h5v1H1zM3 1h1v5H3z" /></Ico></Expander>
              <Dots />
              <Folder kind="tree" />
              <TreeLabel>Номенклатура</TreeLabel>
            </TreeItem>
          </Tree>
          <InfoLabel htmlFor="info">Информация по товару:</InfoLabel>
          <PriceBlock>
            <Combo $w={254}>
              <Select id="info" defaultValue="Цены"><option>Цены</option></Select>
              <DropArrow><Down /></DropArrow>
            </Combo>
            <GridFrame $h={234} $w={355}>
              <GridClip>
                <Sheet>
                  <colgroup><col style={{ width: 154 }} /><col style={{ width: 70 }} /><col style={{ width: 70 }} /><col /></colgroup>
                  <thead><tr><Head>Тип цены</Head><Head $active>Цена</Head><Head>с НДС</Head><Head>Вал.</Head></tr></thead>
                  <tbody>
                    {prices.map((r, i) => (
                      <tr key={i}>
                        {r.map((v, j) => <Cell key={j} $right={j === 1 || j === 2} $selected={i === 0 && j === 1}>{v}</Cell>)}
                      </tr>
                    ))}
                  </tbody>
                </Sheet>
              </GridClip>
              <Scroll before={0} after={1} />
              <Marker />
            </GridFrame>
          </PriceBlock>
          <LeftFooter>
            <Stack>
              <PushButton $w={66} $h={46}>Поиск</PushButton>
              <PushButton $w={66} $h={21}>X</PushButton>
            </Stack>
            <Note>тип цены: ЕЕТ Дания ;<br />Скидка менеджера : 0 %</Note>
            <NoteInput aria-label="Значение" />
          </LeftFooter>
        </LeftPane>

        <RightPane>
          <StoreRow>
            <StoreLabel htmlFor="store">Склад:</StoreLabel>
            <StoreField>
              <StoreInput id="store" defaultValue="Платный" />
              <Ellipsis aria-label="Выбрать склад">...</Ellipsis>
            </StoreField>
            <PushButton $w={23} $h={21}>X</PushButton>
          </StoreRow>
          <GridFrame>
            <GridClip>
              <Sheet>
                <colgroup>{columns.map((c, i) => <col key={i} style={{ width: c.w }} />)}</colgroup>
                <thead><tr>{columns.map((c, i) => <Head key={i} $active={c.active}>{c.title}</Head>)}</tr></thead>
                <tbody>
                  {goods.map((g, i) => (
                    <tr key={i}>
                      <Cell $group>{g.group ? <Folder kind="open" /> : g.no ? <Folder kind="item" /> : null}</Cell>
                      <Cell $group={g.group} /><Cell $group={g.group} /><Cell $group={g.group} />
                      <Cell $group={g.group} $selected={i === 2}>{g.no}</Cell>
                      <Cell $group={g.group}>{g.name}</Cell>
                      <Cell $group={g.group}>{g.en}</Cell>
                    </tr>
                  ))}
                </tbody>
              </Sheet>
            </GridClip>
            <Scroll before={305} after={311} />
          </GridFrame>
          <Summary>Пр.Накл № 15093; св. остаток: 1; Цена (без НДС): 296.53 у.е.</Summary>
          <Actions>
            <PushButton $w={95}>Цены менеджера</PushButton>
            <PushButton $w={95}>Отчет по ценам</PushButton>
            <PushButton $w={95}>Загрузка ...</PushButton>
            <PushButton $w={95}><u>И</u>стория</PushButton>
            <PushButton $w={95}>Закрыть</PushButton>
            <PushButton $w={95}>П<u>о</u>казать</PushButton>
          </Actions>
        </RightPane>
      </Workspace>

      <WindowTabs>
        <WindowTab $active><BookIcon />Товары (29.11.13)</WindowTab>
        <WindowTab><BookIcon />Справочник: Валюты (29.11.13)</WindowTab>
        <WindowTab><DataIcon />Номенклатура:Ernitec IP видеокамеры.Купольные.IP-в...</WindowTab>
      </WindowTabs>
      <StatusBar>
        <Hint>Для получения подсказки нажмите F1</Hint>
        <StatusCell $w={26} />
        <StatusCell $w={28}>NUM</StatusCell>
        <StatusCell $w={151}>{'ТА: 29.11.13  09:26:44'}</StatusCell>
        <StatusCell $w={151}>БИ: 4 квартал 2013 г.</StatusCell>
        <StatusCell $w={151}>ТП:</StatusCell>
      </StatusBar>
      <Taskbar>
        <StartButton><Flag /><StartText>Пуск</StartText></StartButton>
        <AppButton aria-label="Диспетчер сервера"><Server /></AppButton>
        <AppButton aria-label="PowerShell"><Shell /></AppButton>
        <AppButton aria-label="Проводник"><Explorer /></AppButton>
        <AppButton aria-label="Excel" $state="many"><Excel /></AppButton>
        <AppButton aria-label="Word"><Word /></AppButton>
        <AppButton aria-label="Chrome" $state="open"><Chrome /></AppButton>
        <AppButton aria-label="PowerPoint" $state="many"><Power /></AppButton>
        <AppButton aria-label="QIP" $state="open"><Robot /></AppButton>
        <AppButton aria-label="1С:Предприятие" $state="active"><LogoV7 size={34} /></AppButton>
        <Spring />
        <Lang>EN</Lang>
        <Divider />
        <Tray>
          <TrayIcons />
          <Clock>9:34<br />29.11.2013</Clock>
          <DesktopIcon />
        </Tray>
      </Taskbar>
    </Page>
  );
}
